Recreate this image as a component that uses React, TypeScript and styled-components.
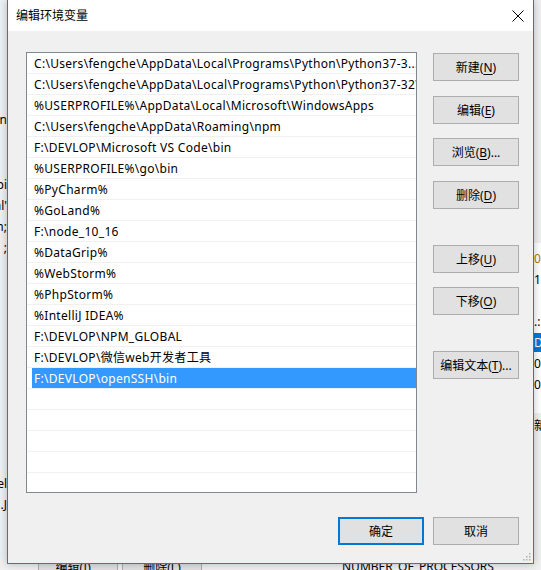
import React from "react";
import styled, { createGlobalStyle } from "styled-components";

const Global = createGlobalStyle`
  html, body { margin: 0; padding: 0; overflow: hidden; }
  body { font-family: "Noto Sans", "Noto Sans CJK SC", sans-serif; font-size: 12px; }
`;

const FONT = `"Noto Sans", "Noto Sans CJK SC", sans-serif`;

const Desktop = styled.div`
  position: relative;
  width: 541px;
  height: 570px;
  overflow: hidden;
  background: #f0f0f0;
  font-family: ${FONT};
`;

/* background window pieces peeking out around the dialog */
const BackLeft = styled.div`
  position: absolute;
  left: 0;
  top: 0;
  width: 7px;
  height: 570px;
  background: #f0f0f0;
  overflow: hidden;
`;

const BackFrag = styled.div<{ $top: number }>`
  position: absolute;
  right: 0;
  top: ${(p) => p.$top}px;
  font-size: 12px;
  line-height: 16px;
  color: #000;
  white-space: nowrap;
`;

const BackRight = styled.div`
  position: absolute;
  left: 534px;
  top: 0;
  width: 7px;
  height: 570px;
  background: #f0f0f0;
  overflow: hidden;
`;

const BackRightList = styled.div`
  position: absolute;
  left: 0;
  top: 243px;
  width: 20px;
  height: 170px;
  background: #fff;
`;

const BackRightRow = styled.div<{ $top: number; $sel?: boolean; $color?: string }>`
  position: absolute;
  left: 0;
  top: ${(p) => p.$top}px;
  width: 20px;
  height: 19px;
  line-height: 19px;
  font-size: 12px;
  color: ${(p) => (p.$sel ? "#fff" : p.$color || "#000")};
  background: ${(p) => (p.$sel ? "#0078d7" : "transparent")};
  white-space: nowrap;
`;

const BackBottom = styled.div`
  position: absolute;
  left: 0;
  top: 564px;
  width: 541px;
  height: 6px;
  background: #f0f0f0;
  overflow: hidden;
`;

const BackButton = styled.div<{ $left: number; $width: number }>`
  position: absolute;
  left: ${(p) => p.$left}px;
  top: -6px;
  width: ${(p) => p.$width}px;
  height: 24px;
  box-sizing: border-box;
  border: 1px solid #adadad;
  background: #e1e1e1;
  font-size: 12px;
  line-height: 18px;
  text-align: center;
  color: #000;
`;

const BackText = styled.div<{ $left: number }>`
  position: absolute;
  left: ${(p) => p.$left}px;
  top: -4px;
  font-size: 12px;
  line-height: 14px;
  white-space: nowrap;
  color: #000;
`;

const Dialog = styled.div`
  position: absolute;
  left: 7px;
  top: 0;
  width: 527px;
  height: 564px;
  box-sizing: border-box;
  border: 1px solid #1a7fd4;
  border-top: none;
  background: #f0f0f0;
  display: flex;
  flex-direction: column;
  box-shadow: 0 0 8px rgba(0, 0, 0, 0.25);
`;

const TitleBar = styled.div`
  height: 31px;
  flex: 0 0 31px;
  background: #fff;
  display: flex;
  align-items: center;
  justify-content: space-between;
  padding: 0 9px 0 8px;
`;

const Title = styled.div`
  font-size: 12px;
  color: #000;
  line-height: 16px;
`;

const CloseIcon = styled.svg`
  display: block;
`;

const Content = styled.div`
  flex: 1;
  padding: 21px 14px 0 18px;
  display: grid;
  grid-template-columns: 391px 86px;
  grid-template-rows: 441px auto;
  column-gap: 16px;
  row-gap: 24px;
`;

const ListBox = styled.div`
  box-sizing: border-box;
  border: 1px solid #828790;
  background: #fff;
  overflow: hidden;
  display: flex;
  flex-direction: column;
`;

const Row = styled.div`
  height: 21px;
  flex: 0 0 21px;
  box-sizing: border-box;
  border-bottom: 1px solid #f0f0f0;
  display: flex;
  align-items: stretch;
  padding-left: 5px;
`;

const RowLabel = styled.div<{ $selected?: boolean }>`
  flex: 1;
  padding-left: 2px;
  line-height: 21px;
  font-size: 12px;
  letter-spacing: 0.3px;
  white-space: nowrap;
  overflow: hidden;
  color: ${(p) => (p.$selected ? "#fff" : "#000")};
  background: ${(p) => (p.$selected ? "#3399ff" : "transparent")};
`;

const ButtonColumn = styled.div`
  display: flex;
  flex-direction: column;
`;

const Button = styled.button<{ $mt?: number; $default?: boolean }>`
  width: 86px;
  height: 28px;
  margin-top: ${(p) => p.$mt ?? 0}px;
  box-sizing: border-box;
  border: ${(p) => (p.$default ? "2px solid #0078d7" : "1px solid #adadad")};
  background: #e1e1e1;
  font-family: ${FONT};
  font-size: 12px;
  color: #000;
  padding: 0;
  display: flex;
  align-items: center;
  justify-content: center;
  white-space: nowrap;
  u { text-decoration: underline; text-underline-offset: 2px; }
`;

const Footer = styled.div`
  grid-column: 1 / -1;
  display: flex;
  justify-content: flex-end;
  gap: 9px;
`;

const Grip = styled.svg`
  position: absolute;
  right: 2px;
  bottom: 2px;
`;

const items = [
  "C:\\Users\\fengche\\AppData\\Local\\Programs\\Python\\Python37-3...",
  "C:\\Users\\fengche\\AppData\\Local\\Programs\\Python\\Python37-32\\",
  "%USERPROFILE%\\AppData\\Local\\Microsoft\\WindowsApps",
  "C:\\Users\\fengche\\AppData\\Roaming\\npm",
  "F:\\DEVLOP\\Microsoft VS Code\\bin",
  "%USERPROFILE%\\go\\bin",
  "%PyCharm%",
  "%GoLand%",
  "F:\\node_10_16",
  "%DataGrip%",
  "%WebStorm%",
  "%PhpStorm%",
  "%IntelliJ IDEA%",
  "F:\\DEVLOP\\NPM_GLOBAL",
  "F:\\DEVLOP\\微信web开发者工具",
  "F:\\DEVLOP\\openSSH\\bin",
];

const SELECTED = 15;

export default function App() {
  const rows = [...items, "", "", "", ""];
  return (
    <>
      <Global />
      <Desktop>
        <BackLeft>
          <BackFrag $top={112}>n</BackFrag>
          <BackFrag $top={177}>pi</BackFrag>
          <BackFrag $top={198}>al'</BackFrag>
          <BackFrag $top={219}>n;</BackFrag>
          <BackFrag $top={240}>;</BackFrag>
          <BackFrag $top={476}>el</BackFrag>
          <BackFrag $top={497}>.J</BackFrag>
        </BackLeft>
        <BackRight>
          <BackRightList>
            <BackRightRow $top={6} $color="#c07000">01</BackRightRow>
            <BackRightRow $top={27}>1</BackRightRow>
            <BackRightRow $top={69}>.:</BackRightRow>
            <BackRightRow $top={90} $sel>Da</BackRightRow>
            <BackRightRow $top={111}>0</BackRightRow>
            <BackRightRow $top={132}>01</BackRightRow>
          </BackRightList>
          <BackRightRow $top={416}>新</BackRightRow>
        </BackRight>
        <BackBottom>
          <BackButton $left={38} $width={80}>编辑(I)...</BackButton>
          <BackButton $left={122} $width={80}>删除(L)</BackButton>
          <BackText $left={342}>NUMBER_OF_PROCESSORS</BackText>
        </BackBottom>

        <Dialog>
          <TitleBar>
            <Title>编辑环境变量</Title>
            <CloseIcon width="12" height="12" viewBox="0 0 12 12">
              <path d="M0.5 0.5 L11.5 11.5 M11.5 0.5 L0.5 11.5" stroke="#000" strokeWidth="1" fill="none" />
            </CloseIcon>
          </TitleBar>
          <Content>
            <ListBox>
              {rows.map((t, i) => (
                <Row key={i}>
                  <RowLabel $selected={i === SELECTED}>{t}</RowLabel>
                </Row>
              ))}
            </ListBox>
            <ButtonColumn>
              <Button $mt={1}>新建(<u>N</u>)</Button>
              <Button $mt={15}>编辑(<u>E</u>)</Button>
              <Button $mt={14}>浏览(<u>B</u>)...</Button>
              <Button $mt={15}>删除(<u>D</u>)</Button>
              <Button $mt={36}>上移(<u>U</u>)</Button>
              <Button $mt={14}>下移(<u>O</u>)</Button>
              <Button $mt={36}>编辑文本(<u>T</u>)...</Button>
            </ButtonColumn>
            <Footer>
              <Button $default>确定</Button>
              <Button>取消</Button>
            </Footer>
          </Content>
          <Grip width="10" height="10" viewBox="0 0 10 10">
            {[
              [8, 2], [8, 5], [5, 5], [8, 8], [5, 8], [2, 8],
            ].map(([x, y], i) => (
              <rect key={i} x={x} y={y} width="1.5" height="1.5" fill="#b0b0b0" />
            ))}
          </Grip>
        </Dialog>
      </Desktop>
    </>
  );
}
